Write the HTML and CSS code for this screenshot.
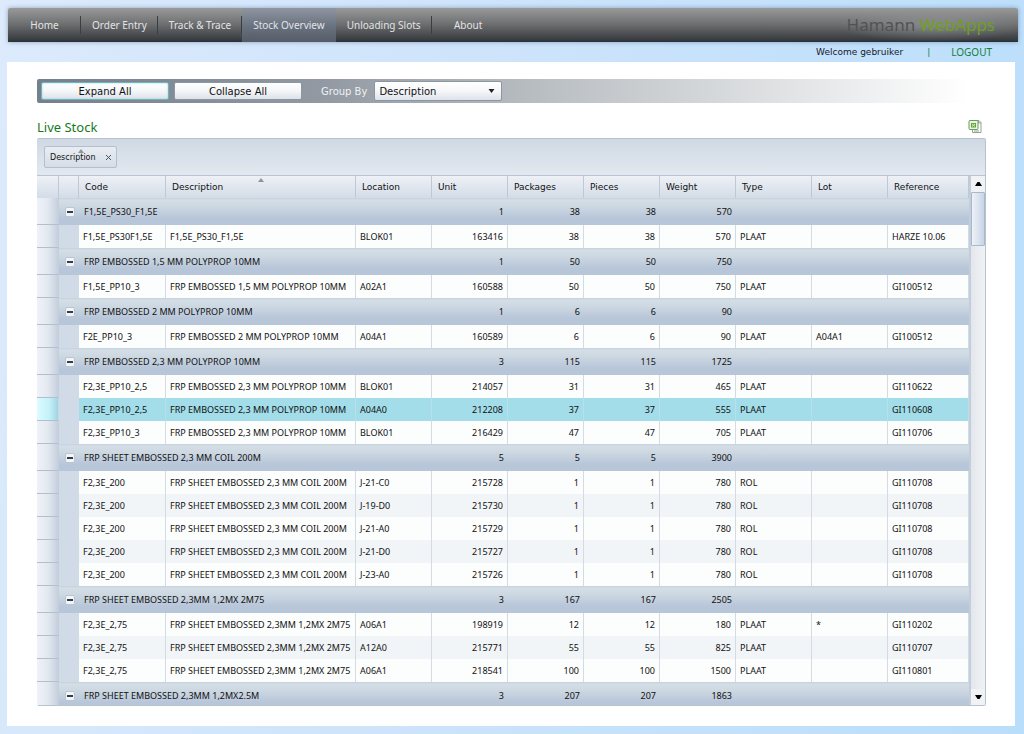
FILE: index.html
```html
<!DOCTYPE html>
<html lang="en">
<head>
<meta charset="utf-8">
<title>Hamann WebApps - Stock Overview</title>
<link rel="stylesheet" href="styles.css">
</head>
<body>
<header class="topbar">
  <nav class="menu">
    <a class="menu-item" href="#">Home</a>
    <a class="menu-item" href="#">Order Entry</a>
    <a class="menu-item" href="#">Track &amp; Trace</a>
    <a class="menu-item active" href="#">Stock Overview</a>
    <a class="menu-item" href="#">Unloading Slots</a>
    <a class="menu-item last" href="#">About</a>
  </nav>
  <div class="logo">Hamann <span class="logo-accent">WebApps</span></div>
</header>
<div class="userbar">
  <span class="welcome">Welcome gebruiker</span>
  <span class="bar">|</span>
  <a class="logout" href="#">LOGOUT</a>
</div>
<main class="panel">
  <div class="toolbar">
    <button class="btn focused" type="button">Expand All</button>
    <button class="btn" type="button">Collapse All</button>
    <label class="group-label" for="groupby">Group By</label>
    <div class="select-box">
      <select id="groupby" class="select"><option>Description</option></select>
      <svg class="select-arrow" width="7" height="5" viewBox="0 0 7 5"><path d="M0.500 0h6L3.500 4z" fill="#222"/></svg>
    </div>
  </div>
  <div class="title-row">
    <h1 class="title">Live Stock</h1>
    <button class="export" type="button" aria-label="Export to Excel">
      <svg width="14" height="15" viewBox="0 0 14 15">
        <path d="M4.500 1.500h6.500l2 2v10H4.500z" fill="#fff" stroke="#8aa591"/>
        <path d="M10.500 1.500v2.500h2.500M6 12h5" fill="none" stroke="#8aa591"/>
        <rect x="1" y="1.500" width="9" height="9" rx="1" fill="#e9f4df" stroke="#6d9a5f"/>
        <path d="M3 4h5v4.500H3z" fill="#65a33e"/>
        <path d="M4 5l3 2.500M7 5l-3 2.500" stroke="#d5ecc1"/>
      </svg>
    </button>
  </div>
  <section class="grid">
    <div class="group-panel">
      <div class="chip">
        <svg class="sort chip-sort" width="6" height="4" viewBox="0 0 6 4"><path d="M3 0l3 4H0z" fill="#8f959d"/></svg>
        <span>Description</span>
        <button class="chip-close" type="button" aria-label="Remove grouping">
          <svg width="5" height="5" viewBox="0 0 5 5"><path d="M0 0l5 5M5 0L0 5" stroke="#4d5560"/></svg>
        </button>
      </div>
    </div>
    <div class="grid-body">
      <div class="viewport">
        <table class="table">
          <colgroup><col class="c-head"><col class="c-indent"><col class="c-code"><col class="c-desc"><col class="c-std"><col class="c-std"><col class="c-std"><col class="c-std"><col class="c-std"><col class="c-std"><col class="c-std"><col></colgroup>
          <thead>
            <tr><th></th><th></th><th>Code</th><th class="sorted">Description<svg class="sort" width="6" height="4" viewBox="0 0 6 4"><path d="M3 0l3 4H0z" fill="#8f959d"/></svg></th><th>Location</th><th>Unit</th><th>Packages</th><th>Pieces</th><th>Weight</th><th>Type</th><th>Lot</th><th>Reference</th></tr>
          </thead>
          <tbody>
            <tr class="group"><td class="rh"></td><td class="tg"><button class="toggle" type="button" aria-label="Collapse"></button></td><td colspan="3">F1,5E_PS30_F1,5E</td><td class="n">1</td><td class="n">38</td><td class="n">38</td><td class="n">570</td><td colspan="3"></td></tr>
            <tr class="row"><td class="rh"></td><td class="ind"></td><td>F1,5E_PS30F1,5E</td><td>F1,5E_PS30_F1,5E</td><td>BLOK01</td><td class="n">163416</td><td class="n">38</td><td class="n">38</td><td class="n">570</td><td>PLAAT</td><td></td><td>HARZE 10.06</td></tr>
            <tr class="group"><td class="rh"></td><td class="tg"><button class="toggle" type="button" aria-label="Collapse"></button></td><td colspan="3">FRP EMBOSSED 1,5 MM POLYPROP 10MM</td><td class="n">1</td><td class="n">50</td><td class="n">50</td><td class="n">750</td><td colspan="3"></td></tr>
            <tr class="row"><td class="rh"></td><td class="ind"></td><td>F1,5E_PP10_3</td><td>FRP EMBOSSED 1,5 MM POLYPROP 10MM</td><td>A02A1</td><td class="n">160588</td><td class="n">50</td><td class="n">50</td><td class="n">750</td><td>PLAAT</td><td></td><td>GI100512</td></tr>
            <tr class="group"><td class="rh"></td><td class="tg"><button class="toggle" type="button" aria-label="Collapse"></button></td><td colspan="3">FRP EMBOSSED 2 MM POLYPROP 10MM</td><td class="n">1</td><td class="n">6</td><td class="n">6</td><td class="n">90</td><td colspan="3"></td></tr>
            <tr class="row"><td class="rh"></td><td class="ind"></td><td>F2E_PP10_3</td><td>FRP EMBOSSED 2 MM POLYPROP 10MM</td><td>A04A1</td><td class="n">160589</td><td class="n">6</td><td class="n">6</td><td class="n">90</td><td>PLAAT</td><td>A04A1</td><td>GI100512</td></tr>
            <tr class="group"><td class="rh"></td><td class="tg"><button class="toggle" type="button" aria-label="Collapse"></button></td><td colspan="3">FRP EMBOSSED 2,3 MM POLYPROP 10MM</td><td class="n">3</td><td class="n">115</td><td class="n">115</td><td class="n">1725</td><td colspan="3"></td></tr>
            <tr class="row"><td class="rh"></td><td class="ind"></td><td>F2,3E_PP10_2,5</td><td>FRP EMBOSSED 2,3 MM POLYPROP 10MM</td><td>BLOK01</td><td class="n">214057</td><td class="n">31</td><td class="n">31</td><td class="n">465</td><td>PLAAT</td><td></td><td>GI110622</td></tr>
            <tr class="row selected"><td class="rh"></td><td class="ind"></td><td>F2,3E_PP10_2,5</td><td>FRP EMBOSSED 2,3 MM POLYPROP 10MM</td><td>A04A0</td><td class="n">212208</td><td class="n">37</td><td class="n">37</td><td class="n">555</td><td>PLAAT</td><td></td><td>GI110608</td></tr>
            <tr class="row"><td class="rh"></td><td class="ind"></td><td>F2,3E_PP10_3</td><td>FRP EMBOSSED 2,3 MM POLYPROP 10MM</td><td>BLOK01</td><td class="n">216429</td><td class="n">47</td><td class="n">47</td><td class="n">705</td><td>PLAAT</td><td></td><td>GI110706</td></tr>
            <tr class="group"><td class="rh"></td><td class="tg"><button class="toggle" type="button" aria-label="Collapse"></button></td><td colspan="3">FRP SHEET EMBOSSED 2,3 MM COIL 200M</td><td class="n">5</td><td class="n">5</td><td class="n">5</td><td class="n">3900</td><td colspan="3"></td></tr>
            <tr class="row"><td class="rh"></td><td class="ind"></td><td>F2,3E_200</td><td>FRP SHEET EMBOSSED 2,3 MM COIL 200M</td><td>J-21-C0</td><td class="n">215728</td><td class="n">1</td><td class="n">1</td><td class="n">780</td><td>ROL</td><td></td><td>GI110708</td></tr>
            <tr class="row alt"><td class="rh"></td><td class="ind"></td><td>F2,3E_200</td><td>FRP SHEET EMBOSSED 2,3 MM COIL 200M</td><td>J-19-D0</td><td class="n">215730</td><td class="n">1</td><td class="n">1</td><td class="n">780</td><td>ROL</td><td></td><td>GI110708</td></tr>
            <tr class="row"><td class="rh"></td><td class="ind"></td><td>F2,3E_200</td><td>FRP SHEET EMBOSSED 2,3 MM COIL 200M</td><td>J-21-A0</td><td class="n">215729</td><td class="n">1</td><td class="n">1</td><td class="n">780</td><td>ROL</td><td></td><td>GI110708</td></tr>
            <tr class="row alt"><td class="rh"></td><td class="ind"></td><td>F2,3E_200</td><td>FRP SHEET EMBOSSED 2,3 MM COIL 200M</td><td>J-21-D0</td><td class="n">215727</td><td class="n">1</td><td class="n">1</td><td class="n">780</td><td>ROL</td><td></td><td>GI110708</td></tr>
            <tr class="row"><td class="rh"></td><td class="ind"></td><td>F2,3E_200</td><td>FRP SHEET EMBOSSED 2,3 MM COIL 200M</td><td>J-23-A0</td><td class="n">215726</td><td class="n">1</td><td class="n">1</td><td class="n">780</td><td>ROL</td><td></td><td>GI110708</td></tr>
            <tr class="group"><td class="rh"></td><td class="tg"><button class="toggle" type="button" aria-label="Collapse"></button></td><td colspan="3">FRP SHEET EMBOSSED 2,3MM 1,2MX 2M75</td><td class="n">3</td><td class="n">167</td><td class="n">167</td><td class="n">2505</td><td colspan="3"></td></tr>
            <tr class="row"><td class="rh"></td><td class="ind"></td><td>F2,3E_2,75</td><td>FRP SHEET EMBOSSED 2,3MM 1,2MX 2M75</td><td>A06A1</td><td class="n">198919</td><td class="n">12</td><td class="n">12</td><td class="n">180</td><td>PLAAT</td><td>*</td><td>GI110202</td></tr>
            <tr class="row alt"><td class="rh"></td><td class="ind"></td><td>F2,3E_2,75</td><td>FRP SHEET EMBOSSED 2,3MM 1,2MX 2M75</td><td>A12A0</td><td class="n">215771</td><td class="n">55</td><td class="n">55</td><td class="n">825</td><td>PLAAT</td><td></td><td>GI110707</td></tr>
            <tr class="row"><td class="rh"></td><td class="ind"></td><td>F2,3E_2,75</td><td>FRP SHEET EMBOSSED 2,3MM 1,2MX 2M75</td><td>A06A1</td><td class="n">218541</td><td class="n">100</td><td class="n">100</td><td class="n">1500</td><td>PLAAT</td><td></td><td>GI110801</td></tr>
            <tr class="group"><td class="rh"></td><td class="tg"><button class="toggle" type="button" aria-label="Collapse"></button></td><td colspan="3">FRP SHEET EMBOSSED 2,3MM 1,2MX2.5M</td><td class="n">3</td><td class="n">207</td><td class="n">207</td><td class="n">1863</td><td colspan="3"></td></tr>
          </tbody>
        </table>
      </div>
      <div class="scrollbar">
        <button class="scroll-btn" type="button" aria-label="Scroll up"><svg width="7" height="4" viewBox="0 0 7 4"><path d="M2.500 0h2L7 4H0z"/></svg></button>
        <div class="scroll-track"><div class="scroll-thumb"></div></div>
        <button class="scroll-btn" type="button" aria-label="Scroll down"><svg width="7" height="4" viewBox="0 0 7 4"><path d="M0 0h7L4.500 4h-2z"/></svg></button>
      </div>
    </div>
  </section>
</main>
</body>
</html>
```
FILE: styles.css
```css
* { box-sizing: border-box; }

body {
  margin: 0;
  height: 100vh;
  padding: 8px 9px 8px 7px;
  display: flex;
  flex-direction: column;
  background: linear-gradient(100deg, #dceafc 0%, #cbe3fb 50%, #b9defb 100%);
  font-family: "DejaVu Sans", Verdana, sans-serif;
  font-size: 9px;
  color: #111;
}

button { font: inherit; color: inherit; padding: 0; cursor: pointer; }
svg { display: block; }

.topbar {
  flex: none;
  height: 34px;
  margin: 0 -3px 0 1px;
  display: flex;
  justify-content: space-between;
  background: linear-gradient(#9a9a9a 0%, #6f7173 45%, #3b3e41 92%, #25303a 100%);
  box-shadow: 0 0 4px rgba(70, 90, 115, 0.5);
  border-radius: 2px 2px 0 0;
}
.menu { display: flex; font-family: "Noto Sans", sans-serif; font-size: 10px; }
.menu-item {
  min-width: 73px;
  padding: 0 11px;
  display: flex;
  align-items: center;
  justify-content: center;
  color: #e2e3e5;
  text-decoration: none;
  background: linear-gradient(#3b3d40, #3b3d40) right 0 center / 1px 18px no-repeat;
}
.menu-item.active { background: linear-gradient(#9096a0, #6b7482 50%, #555b66); }
.menu-item.last { background: none; }
.logo {
  width: 190px;
  padding-right: 23px;
  line-height: 34px;
  text-align: right;
  white-space: nowrap;
  font-family: "Noto Sans", sans-serif;
  font-size: 17px;
  color: #505356;
  background: radial-gradient(ellipse at 55% 52%, rgba(160, 160, 160, 0.55), rgba(160, 160, 160, 0) 65%);
}
.logo-accent { color: #6f9f23; }

.userbar {
  flex: none;
  height: 20px;
  padding-right: 23px;
  display: flex;
  align-items: center;
  justify-content: flex-end;
  color: #14202b;
}
.bar { margin: 0 21px 0 24px; color: #178038; }
.logout {
  font-family: "Noto Sans", sans-serif;
  font-size: 10px;
  color: #178038;
  text-decoration: none;
}

.panel {
  flex: 1;
  min-height: 0;
  padding: 17px 29px 20px 30px;
  display: flex;
  flex-direction: column;
  background: #fff;
}

.toolbar {
  flex: none;
  height: 24px;
  padding: 0 4px;
  display: flex;
  align-items: center;
  gap: 5px;
  border-radius: 2px;
  background: linear-gradient(90deg, #74808c 0%, #9299a2 30%, #bcc1c5 55%, #dfe1e3 78%, #fff 98%);
  font-size: 10px;
}
.btn {
  width: 128px;
  height: 18px;
  border: 1px solid #8b97a3;
  border-radius: 2px;
  background: linear-gradient(#fff, #f4f6f8 50%, #dde2ea);
}
.btn.focused { border-color: #6fb3bd; box-shadow: inset 0 0 2px #8fd0d8; }
.group-label { margin: 0 2px 0 14px; color: #eef0f2; }
.select-box { position: relative; width: 128px; height: 20px; }
.select {
  appearance: none;
  width: 100%;
  height: 100%;
  padding: 0 4px;
  border: 1px solid #8b97a3;
  border-radius: 2px;
  background: linear-gradient(#fff, #f6f7f9 50%, #dde2ea);
  font: inherit;
  color: #111;
}
.select-arrow { position: absolute; right: 7px; top: 8px; pointer-events: none; }

.title-row {
  flex: none;
  height: 35px;
  padding: 12px 4px 0 0;
  display: flex;
  align-items: center;
  justify-content: space-between;
}
.title {
  margin: 0;
  font: 400 13px "Noto Sans", sans-serif;
  color: #147a1c;
}
.export { border: 0; background: none; }

.grid {
  flex: 1;
  min-height: 0;
  display: flex;
  flex-direction: column;
  border: 1px solid #b7c2cf;
  border-width: 1px 1px 1px 0;
  border-radius: 2px;
}
.group-panel {
  flex: none;
  height: 37px;
  padding: 7px;
  border-bottom: 1px solid #b9c4d2;
  background: linear-gradient(#cfd9e3, #e3e8f0);
}
.chip {
  position: relative;
  width: 73px;
  height: 22px;
  padding: 0 5px;
  display: flex;
  align-items: center;
  justify-content: space-between;
  border: 1px solid #b3bfcd;
  border-radius: 2px;
  background: linear-gradient(#e9edf2, #d5dde8);
  font-size: 8px;
}
.chip-close { border: 0; background: none; }
.sort { position: absolute; top: 2px; left: 50%; margin-left: -3px; }

.grid-body { flex: 1; min-height: 0; display: flex; }
.viewport { flex: 1; min-width: 0; overflow: hidden; background: #d3dce8; }
.table { width: 100%; table-layout: fixed; border-collapse: separate; border-spacing: 0; }
.c-head { width: 22px; }
.c-indent { width: 20px; }
.c-code { width: 87px; }
.c-desc { width: 190px; }
.c-std { width: 76px; }

th, td { padding: 0 4px; white-space: nowrap; overflow: hidden; }
td { font-family: "Noto Sans", sans-serif; }
th {
  position: relative;
  height: 22px;
  padding-left: 6px;
  text-align: left;
  font-weight: 400;
  border-right: 1px solid #bfc9d5;
  background: linear-gradient(#eef1f6, #d3dce7);
}
.group td {
  height: 27px;
  padding-left: 5px;
  background: linear-gradient(#c5d0de 0, #d4dee6 2px, #cdd8e2 30%, #b8c6d9 75%, #b8c6d9 100%);
}
.row td {
  height: 23px;
  border-right: 1px solid #d3dbe4;
  background: #fcfdfd;
}
.row.alt td { background: #f2f5f8; }
.row.selected td { background: #a2dde9; border-right-color: #b9dfe8; }
.row .ind, .row.alt .ind, .row.selected .ind { background: #d1dbe7; border-color: #d1dbe7; }
.group .rh, .row .rh, .row.alt .rh {
  background: linear-gradient(90deg, #eff2f7, #e4e9f1 50%, #c5d0de);
  border-bottom: 1px solid #b3bfcd;
  border-right: 1px solid #c3cedb;
}
.row.selected .rh {
  background: linear-gradient(90deg, #dcfbff, #c3f1f8 60%, #a3d3e0);
  border-bottom: 1px solid #b3bfcd;
}
.n { text-align: right; }
.group .tg { padding: 0 4px 0 6px; }
.toggle {
  display: block;
  width: 10px;
  height: 10px;
  border: 1px solid #b9c5d3;
  border-radius: 2px;
  background: linear-gradient(#333c48, #333c48) center / 6px 2px no-repeat, #f3f6f9;
}

.scrollbar {
  flex: none;
  width: 16px;
  display: flex;
  flex-direction: column;
  border-left: 2px solid #c4cedb;
  background: #e8ebf0;
}
.scroll-btn {
  height: 16px;
  border: 0;
  background: #f0f2f5;
  display: flex;
  align-items: center;
  justify-content: center;
}
.scroll-track { flex: 1; background: linear-gradient(90deg, #e3e7ed, #f0f2f5); }
.scroll-thumb {
  height: 54px;
  border: 1px solid #a9b8cc;
  border-radius: 1px;
  background: linear-gradient(90deg, #eef2f8, #c8d5e6);
}
```
